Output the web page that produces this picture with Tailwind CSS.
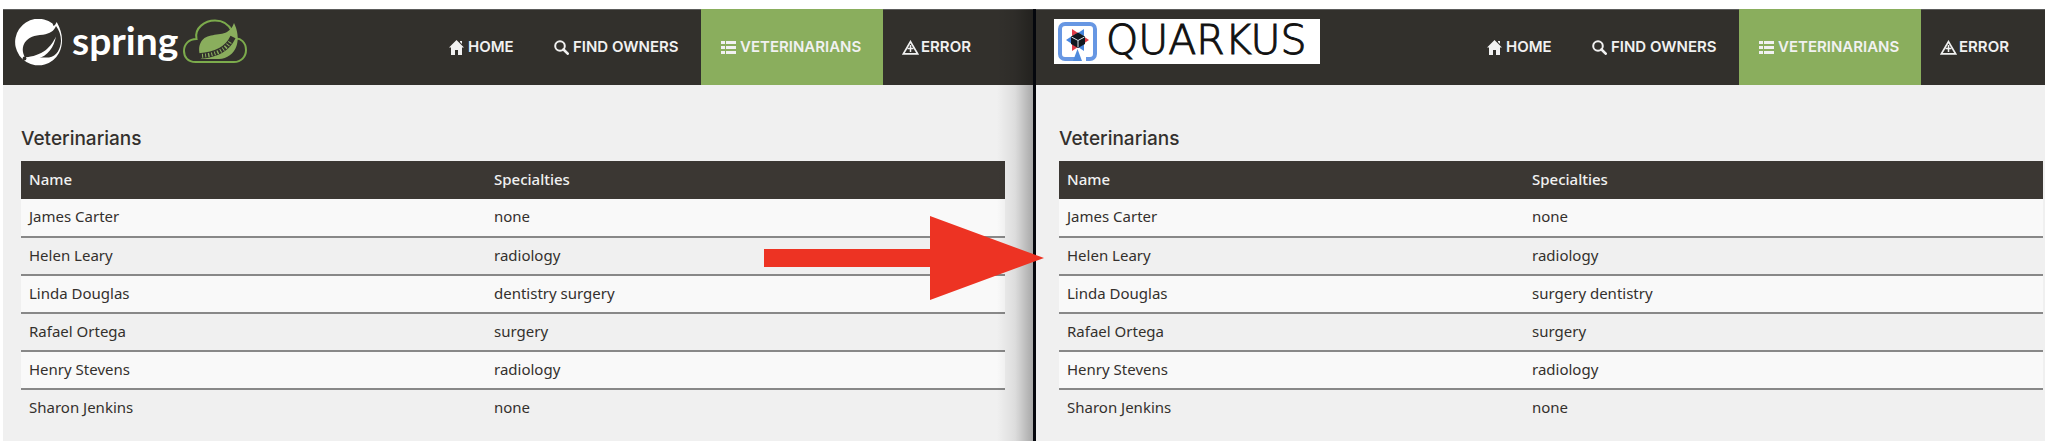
<!DOCTYPE html>
<html lang="en">
<head>
<meta charset="utf-8">
<title>Veterinarians</title>
<script src="https://cdn.jsdelivr.net/npm/@tailwindcss/browser@4"></script>
</head>
<body class="bg-white font-['Noto_Sans',sans-serif] text-[15px] leading-5 text-[#34302d]">
<svg class="hidden" aria-hidden="true">
  <symbol id="home" viewBox="0 0 15 15"><path fill="currentColor" d="M7.5 0 15 7.5h-2V15H9V10H6v5H2V7.5H0L7.5 0ZM11 1h2v3l-2-2Z"/></symbol>
  <symbol id="search" viewBox="0 0 15 15"><circle cx="6" cy="6" r="4.8" fill="none" stroke="currentColor" stroke-width="2"/><path d="m9.500 9.500 4.200 4.200" stroke="currentColor" stroke-width="2.600" stroke-linecap="round"/></symbol>
  <symbol id="list" viewBox="0 0 15 15"><path fill="currentColor" d="M0 1h4v3H0zM5 1h10v3H5zM0 6h4v3H0zM5 6h10v3H5zM0 11h4v3H0zM5 11h10v3H5z"/></symbol>
  <symbol id="warn" viewBox="0 0 17 15"><path d="M8.500 1.600 15.600 13.800H1.400Z" fill="none" stroke="currentColor" stroke-width="1.700"/><path d="M8.500 5v7M5.500 8.500h6" stroke="currentColor" stroke-width="1.500"/></symbol>
</svg>
<div class="flex pt-[9px] pr-[7px] pb-[2px] pl-[3px]">

  <section class="relative flex-[1030] bg-[#f0f0f0]">
    <header class="flex h-[76px] items-start justify-between border-t border-[#5c5c5b] bg-[#32302c] pr-10 pl-3">
      <a href="#" aria-label="Spring" class="mt-[9px] flex items-start text-white">
        <svg class="h-12 w-12" viewBox="0 0 48 48">
          <path d="M37.500 4.500A23.300 23.300 0 1 0 44 34C49 24 47.500 13 41.700 3Q40.500 6 38.500 7Z" fill="#fff"/>
          <path d="M41 7C39 12 35 14.500 28 15.700 19 16.500 14 18 10 23.300 7 28 7 33 10 38.500H34C42 37 45.500 30 46 22 46 16 44 11 41 7Z" fill="#32302c"/>
          <path d="M41 17.500C36 28 28 37 9 38.500V40H22C33 37 39 28 41 17.500Z" fill="#fff"/>
          <circle cx="9.500" cy="39.500" r="1.900" fill="#32302c"/>
        </svg>
        <span class="ml-[9px] font-['Lato',sans-serif] text-[39px] leading-[42px] font-bold">spring</span>
        <svg class="ml-[5px] h-[46px] w-16" viewBox="0 0 64 46">
          <path d="M12.500 43C4.500 43 1 37.500 1 32c0-7 5-12 12.500-12C11 9 22 1.500 32 1.500c8 0 14 4.500 17 10.500 1 3 1.300 5 1.300 8C58 18 63 24 63 31c0 7-5 12-12 12Z" fill="none" stroke="#7cab4c" stroke-width="2"/>
          <path d="M51 4C54.500 11 56 20 53.500 27 51 35 44 39.500 36 40H18C16 34 15 28 18 23 23 14 36 17 44 13Q49 10 51 4Z" fill="#8aae5d"/>
          <path d="M50 18C45 29 34 36 16 37" fill="none" stroke="#32302c" stroke-width="5.500"/>
          <path d="M47 23C42 31 33 36 17 37" fill="none" stroke="#8aae5d" stroke-width="4" stroke-dasharray="1 2 1 2 1.500 2"/>
        </svg>
      </a>
      <nav class="-mt-px flex h-[76px] font-['Inter',sans-serif] text-[15px] font-semibold text-[#f1f1f1]">
        <a href="#" class="flex w-[105px] items-center pl-5"><svg class="mr-1 h-[15px] w-[15px]"><use href="#home"/></svg>HOME</a>
        <a href="#" class="flex w-[167px] items-center pl-5"><svg class="mr-1 h-[15px] w-[15px]"><use href="#search"/></svg>FIND OWNERS</a>
        <a href="#" class="flex w-[182px] items-center bg-[#8aae5d] pl-5"><svg class="mr-1 h-[15px] w-[15px]"><use href="#list"/></svg>VETERINARIANS</a>
        <a href="#" class="flex w-[110px] items-center pl-[19px]"><svg class="mr-[2px] h-[15px] w-[17px]"><use href="#warn"/></svg>ERROR</a>
      </nav>
    </header>
    <main class="pt-[42px] pr-7 pb-[14px] pl-[18px]">
      <h2 class="mb-[10px] font-['Inter',sans-serif] text-[19px] leading-6 font-medium">Veterinarians</h2>
      <table class="w-full table-fixed border-collapse text-left">
        <thead><tr class="h-[38px] bg-[#3b3733] text-[#f1f1f1]"><th class="w-[473px] pb-[3px] pl-2 font-medium">Name</th><th class="pb-[3px] font-medium">Specialties</th></tr></thead>
        <tbody class="divide-y-2 divide-[#888] [&_td]:pb-[3px] [&>tr]:h-[38px] [&>tr:nth-child(odd)]:bg-[#f9f9f9] [&_td:first-child]:pl-2">
          <tr><td>James Carter</td><td>none</td></tr>
          <tr><td>Helen Leary</td><td>radiology</td></tr>
          <tr><td>Linda Douglas</td><td>dentistry surgery</td></tr>
          <tr><td>Rafael Ortega</td><td>surgery</td></tr>
          <tr><td>Henry Stevens</td><td>radiology</td></tr>
          <tr><td>Sharon Jenkins</td><td>none</td></tr>
        </tbody>
      </table>
    </main>
    <div class="pointer-events-none absolute inset-y-0 right-0 w-9 bg-linear-to-r from-black/0 via-black/8 to-black/30"></div>
    <svg class="absolute top-[207px] -right-[11px] z-10 h-[84px] w-[280px]" viewBox="0 0 280 84" role="img" aria-label="Arrow from Spring to Quarkus"><path d="M0 33h166V0l114 42-114 42V51H0Z" fill="#ed3323"/></svg>
  </section>

  <div class="w-[3px] bg-[#05070d]"></div>

  <section class="flex-[1009] bg-[#f0f0f0]">
    <header class="flex h-[76px] items-start justify-between border-t border-[#5c5c5b] bg-[#32302c] pr-[14px] pl-[18px]">
      <a href="#" aria-label="Quarkus" class="mt-[9px] flex h-[45px] w-[266px] items-start bg-white pt-[3px] pl-1 text-[#111]">
        <svg class="h-[39px] w-[39px]" viewBox="0 0 39 39">
          <path d="M20 37H7a5 5 0 0 1-5-5V7a5 5 0 0 1 5-5h25a5 5 0 0 1 5 5v25a5 5 0 0 1-5 5h-4" fill="none" stroke="#6797e3" stroke-width="4"/>
          <path d="M19.500 27 24 39H15Z" fill="#4f8add"/>
          <path d="M14 7l6 4-6 3ZM31 18l-6-4v8ZM14 29v-7l6 3Z" fill="#e03c48"/>
          <path d="M26 7l-6 4 6 3ZM8 18l6-4v8ZM26 29v-7l-6 3Z" fill="#4685df"/>
          <path d="m20 10.500 7 4v7.500l-7 4-7-4v-7.500Z" fill="#111820"/>
          <path d="m13.500 15 6.500 3.500 6.500-3.500M20 18.500V25" fill="none" stroke="#d9e2ea" stroke-width="1"/>
        </svg>
        <span class="ml-[9px] font-['DejaVu_Sans_Light','DejaVu_Sans','Open_Sans',sans-serif] text-[41px] leading-9 font-extralight [-webkit-text-stroke:1px_#111]">QUARKUS</span>
      </a>
      <nav class="-mt-px flex h-[76px] font-['Inter',sans-serif] text-[15px] font-semibold text-[#f1f1f1]">
        <a href="#" class="flex w-[105px] items-center pl-5"><svg class="mr-1 h-[15px] w-[15px]"><use href="#home"/></svg>HOME</a>
        <a href="#" class="flex w-[167px] items-center pl-5"><svg class="mr-1 h-[15px] w-[15px]"><use href="#search"/></svg>FIND OWNERS</a>
        <a href="#" class="flex w-[182px] items-center bg-[#8aae5d] pl-5"><svg class="mr-1 h-[15px] w-[15px]"><use href="#list"/></svg>VETERINARIANS</a>
        <a href="#" class="flex w-[110px] items-center pl-[19px]"><svg class="mr-[2px] h-[15px] w-[17px]"><use href="#warn"/></svg>ERROR</a>
      </nav>
    </header>
    <main class="pt-[42px] pr-[2px] pb-[14px] pl-[23px]">
      <h2 class="mb-[10px] font-['Inter',sans-serif] text-[19px] leading-6 font-medium">Veterinarians</h2>
      <table class="w-full table-fixed border-collapse text-left">
        <thead><tr class="h-[38px] bg-[#3b3733] text-[#f1f1f1]"><th class="w-[473px] pb-[3px] pl-2 font-medium">Name</th><th class="pb-[3px] font-medium">Specialties</th></tr></thead>
        <tbody class="divide-y-2 divide-[#888] [&_td]:pb-[3px] [&>tr]:h-[38px] [&>tr:nth-child(odd)]:bg-[#f9f9f9] [&_td:first-child]:pl-2">
          <tr><td>James Carter</td><td>none</td></tr>
          <tr><td>Helen Leary</td><td>radiology</td></tr>
          <tr><td>Linda Douglas</td><td>surgery dentistry</td></tr>
          <tr><td>Rafael Ortega</td><td>surgery</td></tr>
          <tr><td>Henry Stevens</td><td>radiology</td></tr>
          <tr><td>Sharon Jenkins</td><td>none</td></tr>
        </tbody>
      </table>
    </main>
  </section>
</div>
</body>
</html>
